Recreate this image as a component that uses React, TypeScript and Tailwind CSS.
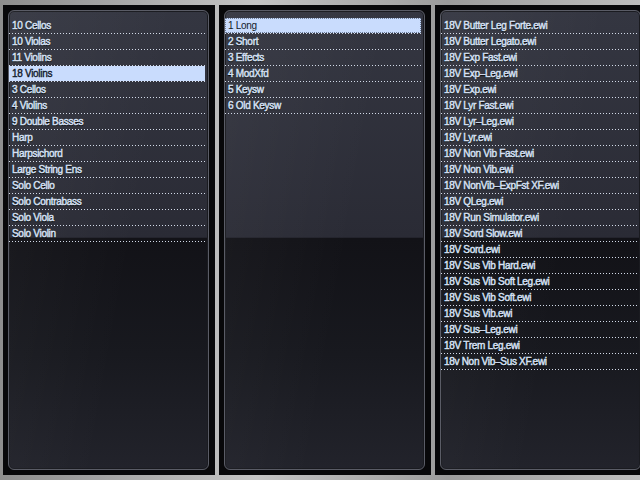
import React from 'react';

const sections = [
  '10 Cellos',
  '10 Violas',
  '11 Violins',
  '18 Violins',
  '3 Cellos',
  '4 Violins',
  '9 Double Basses',
  'Harp',
  'Harpsichord',
  'Large String Ens',
  'Solo Cello',
  'Solo Contrabass',
  'Solo Viola',
  'Solo Violin',
];

const categories = ['1 Long', '2 Short', '3 Effects', '4 ModXfd', '5 Keysw', '6 Old Keysw'];

const patches = [
  '18V Butter Leg Forte.ewi',
  '18V Butter Legato.ewi',
  '18V Exp Fast.ewi',
  '18V Exp\u2013Leg.ewi',
  '18V Exp.ewi',
  '18V Lyr Fast.ewi',
  '18V Lyr\u2013Leg.ewi',
  '18V Lyr.ewi',
  '18V Non Vib Fast.ewi',
  '18V Non Vib.ewi',
  '18V NonVib\u2013ExpFst XF.ewi',
  '18V QLeg.ewi',
  '18V Run Simulator.ewi',
  '18V Sord Slow.ewi',
  '18V Sord.ewi',
  '18V Sus Vib Hard.ewi',
  '18V Sus Vib Soft Leg.ewi',
  '18V Sus Vib Soft.ewi',
  '18V Sus Vib.ewi',
  '18V Sus\u2013Leg.ewi',
  '18V Trem Leg.ewi',
  '18v Non Vib\u2013Sus XF.ewi',
];

interface BrowserListProps {
  items: string[];
  selected?: number;
  focused?: boolean;
}

function BrowserList({ items, selected, focused }: BrowserListProps) {
  return (
    <div className="flex flex-col pt-[7px] pr-[3px]">
      {items.map((item, i) => {
        const isSel = i === selected;
        return (
          <div key={item} className="flex flex-col">
            <div
              className={`h-[15px] flex items-center pl-[3px] text-[10px] leading-none tracking-[-0.3px] whitespace-nowrap ${
                isSel
                  ? `bg-[#c9dcfd] text-[#121a2a] ${focused ? 'outline outline-1 outline-dotted outline-[#6c7c98] -outline-offset-1' : '[-webkit-text-stroke:0.35px_#121a2a]'}`
                  : 'text-[#d6e1f4] [-webkit-text-stroke:0.45px_#d6e1f4] [text-shadow:0_1px_1px_#000]'
              }`}
            >
              {item}
            </div>
            <div className="h-px bg-[repeating-linear-gradient(90deg,#d2dae8_0_1px,transparent_1px_3px)]" />
          </div>
        );
      })}
    </div>
  );
}

function Panel({ children, className }: { children: React.ReactNode; className?: string }) {
  return (
    <div className={`h-full bg-[#08080a] pt-[5px] pb-[5px] pl-[5px] pr-[6px] ${className ?? ''}`}>
      <div className="h-full rounded-[6px] border border-[#5a5c66] overflow-hidden bg-[linear-gradient(180deg,#343641_0%,#2a2b35_49.4%,#121217_49.6%,#18191f_75%,#22232b_100%)] shadow-[inset_0_0_0_1px_#1a1b20]">
        <div className="h-full bg-[linear-gradient(100deg,rgba(255,255,255,0.04)_0%,rgba(255,255,255,0)_60%)]">
          {children}
        </div>
      </div>
    </div>
  );
}

export default function App() {
  return (
    <div
      className="w-[640px] h-[480px] overflow-hidden bg-[linear-gradient(90deg,#8e8e8e,#c4c4c4_40%,#9c9c9c_70%,#bdbdbd)] pt-[5px] pb-[5px] pl-[3px] flex gap-[4px]"
      style={{ fontFamily: '"Liberation Sans", Arial, sans-serif' }}
    >
      <Panel className="w-[212px] shrink-0">
        <BrowserList items={sections} selected={3} />
      </Panel>
      <Panel className="w-[212px] shrink-0">
        <BrowserList items={categories} selected={0} focused />
      </Panel>
      <Panel className="w-[212px] shrink-0">
        <BrowserList items={patches} />
      </Panel>
    </div>
  );
}
